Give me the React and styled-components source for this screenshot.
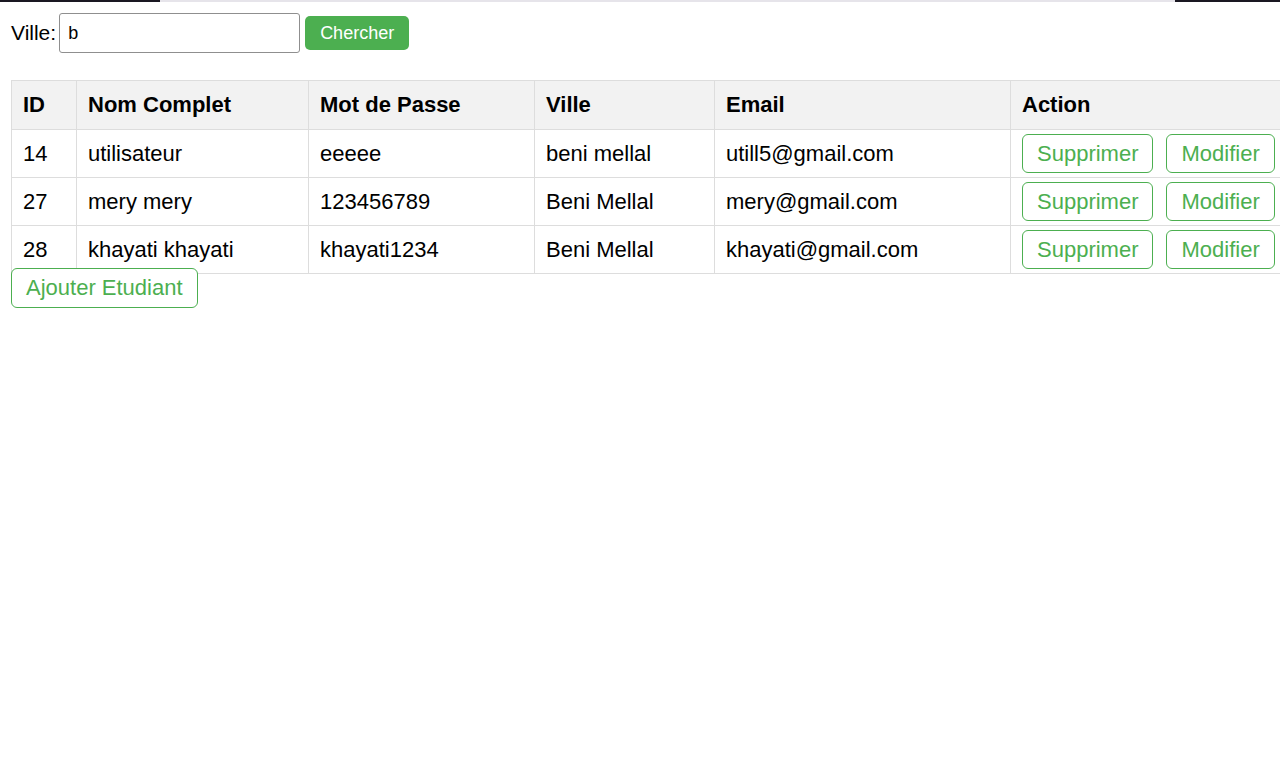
import React, {useState} from 'react';
import styled, {createGlobalStyle} from 'styled-components';

const GlobalStyle = createGlobalStyle`
  html, body {
    margin: 0;
    padding: 0;
    background: #fff;
    overflow: hidden;
    font-family: "Liberation Sans", Arial, sans-serif;
    color: #000;
  }
`;

const TopLine = styled.div`
  height: 2px;
  background: linear-gradient(
    to right,
    #1a1822 0,
    #1a1822 160px,
    #e6e4ea 160px,
    #e6e4ea 1175px,
    #1a1822 1175px
  );
`;

const Page = styled.div`
  padding: 11px 0 0 11px;
`;

const SearchBar = styled.form`
  display: flex;
  align-items: center;
  height: 40px;
`;

const Label = styled.label`
  font-size: 21px;
  margin-right: 3px;
`;

const Input = styled.input`
  box-sizing: border-box;
  width: 241px;
  height: 40px;
  padding: 0 8px;
  border: 1px solid #8f8f8f;
  border-radius: 3px;
  font-family: "Liberation Sans", Arial, sans-serif;
  font-size: 18px;
  outline: none;
`;

const SearchButton = styled.button`
  box-sizing: border-box;
  margin-left: 5px;
  width: 104px;
  height: 34px;
  background: #4caf50;
  color: #fff;
  border: none;
  border-radius: 5px;
  font-family: "Liberation Sans", Arial, sans-serif;
  font-size: 18px;
  cursor: pointer;
`;

const Table = styled.table`
  margin-top: 27px;
  border-collapse: collapse;
  table-layout: fixed;
  width: 1290px;
  font-size: 22px;
`;

const Th = styled.th`
  box-sizing: border-box;
  width: ${props => props.$width}px;
  height: 49px;
  padding: 0 11px;
  background: #f2f2f2;
  border: 1px solid #ddd;
  text-align: left;
  font-weight: bold;
`;

const Td = styled.td`
  height: 47px;
  padding: 0 11px;
  border: 1px solid #ddd;
  vertical-align: middle;
  white-space: nowrap;
`;

const Actions = styled.div`
  display: flex;
  gap: 13px;
`;

const OutlineButton = styled.button`
  box-sizing: border-box;
  height: ${props => props.$height || 39}px;
  padding: 0 ${props => props.$pad || 14}px;
  background: #fff;
  color: #4caf50;
  border: 1px solid #4caf50;
  border-radius: 6px;
  font-family: "Liberation Sans", Arial, sans-serif;
  font-size: 22px;
  cursor: pointer;
`;

const AddButton = styled(OutlineButton)`
  display: block;
  margin-top: -6px;
  position: relative;
`;

const students = [
  {id: 14, nom: 'utilisateur', pass: 'eeeee', ville: 'beni mellal', email: 'utill5@gmail.com'},
  {id: 27, nom: 'mery mery', pass: '123456789', ville: 'Beni Mellal', email: 'mery@gmail.com'},
  {id: 28, nom: 'khayati khayati', pass: 'khayati1234', ville: 'Beni Mellal', email: 'khayati@gmail.com'},
];

const columns = [
  {label: 'ID', width: 65},
  {label: 'Nom Complet', width: 232},
  {label: 'Mot de Passe', width: 226},
  {label: 'Ville', width: 180},
  {label: 'Email', width: 296},
  {label: 'Action', width: 291},
];

const App = () => {
  const [ville, setVille] = useState('b');

  return (
    <>
      <GlobalStyle />
      <TopLine />
      <Page>
        <SearchBar onSubmit={event => event.preventDefault()}>
          <Label htmlFor="ville">Ville:</Label>
          <Input
            id="ville"
            type="text"
            value={ville}
            onChange={event => setVille(event.target.value)}
          />
          <SearchButton type="submit">Chercher</SearchButton>
        </SearchBar>
        <Table>
          <thead>
            <tr>
              {columns.map(col => (
                <Th key={col.label} $width={col.width}>
                  {col.label}
                </Th>
              ))}
            </tr>
          </thead>
          <tbody>
            {students.map(s => (
              <tr key={s.id}>
                <Td>{s.id}</Td>
                <Td>{s.nom}</Td>
                <Td>{s.pass}</Td>
                <Td>{s.ville}</Td>
                <Td>{s.email}</Td>
                <Td>
                  <Actions>
                    <OutlineButton>Supprimer</OutlineButton>
                    <OutlineButton>Modifier</OutlineButton>
                  </Actions>
                </Td>
              </tr>
            ))}
          </tbody>
        </Table>
        <AddButton $height={40}>Ajouter Etudiant</AddButton>
      </Page>
    </>
  );
};

export default App;
